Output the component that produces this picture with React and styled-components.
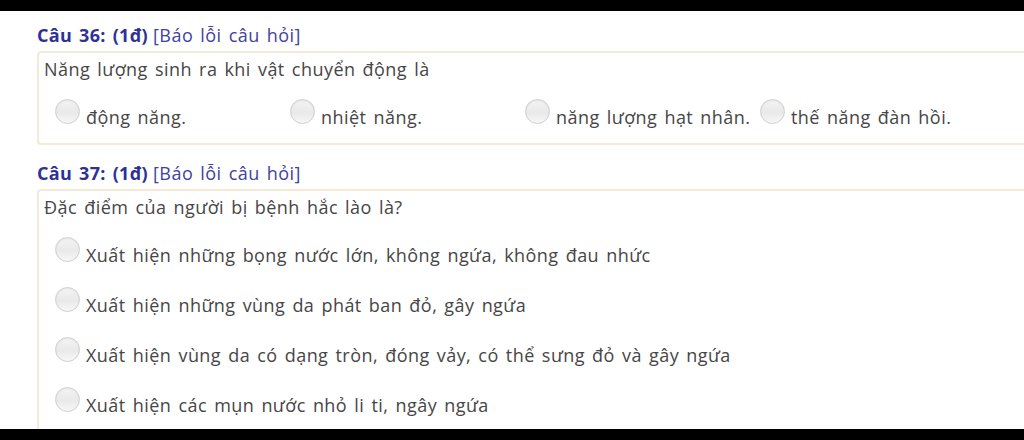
import React from "react";
import styled, { createGlobalStyle } from "styled-components";

const Global = createGlobalStyle`
  html, body { margin: 0; padding: 0; background: #000; }
  body { font-family: "Open Sans", "Noto Sans", sans-serif; }
`;

const Frame = styled.div`
  width: 1024px;
  height: 440px;
  background: #000;
  padding: 11px 0;
  box-sizing: border-box;
`;

const Page = styled.div`
  height: 418px;
  background: #fff;
  overflow: hidden;
  padding: 12px 0 0 37px;
  box-sizing: border-box;
  font-size: 18px;
  letter-spacing: 0.45px;
  word-spacing: 2px;
`;

const Question = styled.section`
  & + & { margin-top: 16px; }
`;

const Heading = styled.div`
  height: 24px;
  line-height: 24px;
  white-space: nowrap;
`;

const Num = styled.b`
  color: #2e3196;
  font-weight: 700;
  letter-spacing: 0.3px;
`;

const Report = styled.span`
  color: #40429f;
  margin-left: 5px;
`;

const Box = styled.div`
  margin-top: 4px;
  border: 2px solid #f3ead8;
  border-right: none;
  border-radius: 4px 0 0 4px;
  padding: 4px 0 11px 5px;
  color: #464646;
`;

const Prompt = styled.div`
  height: 24px;
  line-height: 24px;
  white-space: nowrap;
`;

const Options = styled.div`
  margin-top: 21px;
  padding-left: 11px;
  display: ${(p) => (p.$inline ? "grid" : "flex")};
  grid-template-columns: repeat(4, 235px);
  flex-direction: column;
  gap: ${(p) => (p.$inline ? "0" : "20px")};
`;

const Option = styled.label`
  display: flex;
  align-items: flex-start;
  height: 30px;
  line-height: 30px;
  white-space: nowrap;
`;

const Radio = styled.span`
  flex: none;
  width: 25px;
  height: 25px;
  margin-top: -3px;
  margin-right: 6px;
  border-radius: 50%;
  box-sizing: border-box;
  border: 1px solid #cfcfcf;
  background: linear-gradient(180deg, #f4f4f4 0%, #e9e9e9 55%, #f7f7f7 100%);
  box-shadow: inset 0 1px 2px rgba(0, 0, 0, 0.06);
`;

const questions = [
  {
    num: "Câu 36: (1đ)",
    prompt: "Năng lượng sinh ra khi vật chuyển động là",
    inline: true,
    options: ["động năng.", "nhiệt năng.", "năng lượng hạt nhân.", "thế năng đàn hồi."],
  },
  {
    num: "Câu 37: (1đ)",
    prompt: "Đặc điểm của người bị bệnh hắc lào là?",
    inline: false,
    options: [
      "Xuất hiện những bọng nước lớn, không ngứa, không đau nhức",
      "Xuất hiện những vùng da phát ban đỏ, gây ngứa",
      "Xuất hiện vùng da có dạng tròn, đóng vảy, có thể sưng đỏ và gây ngứa",
      "Xuất hiện các mụn nước nhỏ li ti, ngây ngứa",
    ],
  },
];

export default function App() {
  return (
    <>
      <Global />
      <Frame>
        <Page>
          {questions.map((q) => (
            <Question key={q.num}>
              <Heading>
                <Num>{q.num}</Num>
                <Report>[Báo lỗi câu hỏi]</Report>
              </Heading>
              <Box>
                <Prompt>{q.prompt}</Prompt>
                <Options $inline={q.inline}>
                  {q.options.map((o) => (
                    <Option key={o}>
                      <Radio />
                      {o}
                    </Option>
                  ))}
                </Options>
              </Box>
            </Question>
          ))}
        </Page>
      </Frame>
    </>
  );
}
